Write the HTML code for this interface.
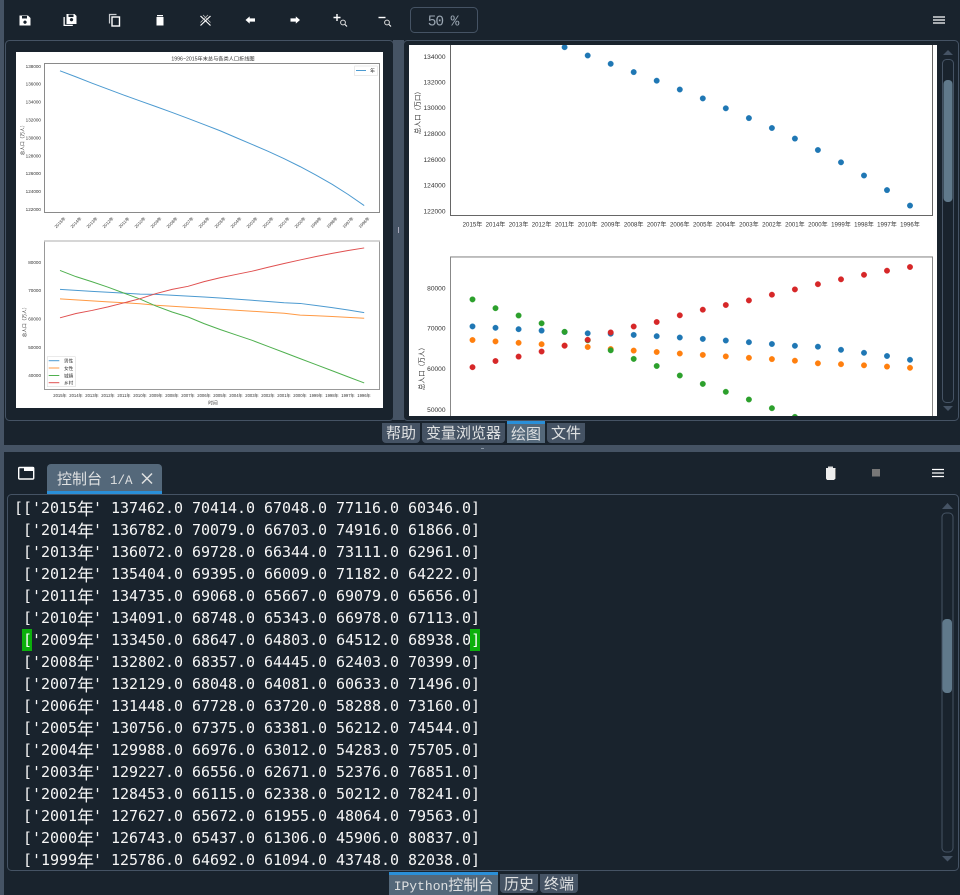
<!DOCTYPE html>
<html><head><meta charset="utf-8"><style>
html,body{margin:0;padding:0;background:#19232d;width:960px;height:895px;overflow:hidden}
body{position:relative}
svg.m{position:absolute;left:0;top:0}
.b{filter:blur(.3px)}
.t{position:absolute;background:#455364;color:#dfe1e2;border-radius:0 0 4px 4px;font:15px/19px "WenQuanYi Zen Hei","Noto Sans CJK SC",sans-serif;text-align:center;box-sizing:border-box}
.a{background:#54687a;border-top:3px solid #2a8fd8;border-radius:0}
#c{position:absolute;left:14px;top:497px;font:15px/22px "DejaVu Sans Mono","Liberation Mono",monospace;color:#f6f6f6;white-space:pre;letter-spacing:-.03px}
#c div{height:22px}
#c i{font:17px/22px "Noto Sans CJK SC",sans-serif;display:inline-block;width:16px;overflow:visible;vertical-align:top}
#c b{font-weight:normal;background:#0cb00c;color:#fff;display:inline-block;height:22px;box-shadow:-1px 0 0 #0cb00c}
</style></head><body>
<svg class="m" width="960" height="895" viewBox="0 0 960 895" xmlns="http://www.w3.org/2000/svg" font-family="'Liberation Sans','Noto Sans CJK SC',sans-serif">
<rect x="0" y="0" width="4" height="895" fill="#455364"/>
<rect x="393" y="40" width="11" height="380" fill="#455364"/>
<rect x="398" y="227" width="1" height="6" fill="#aab"/>
<rect x="0" y="445" width="960" height="7" fill="#455364"/>
<rect x="481" y="448" width="3" height="1" fill="#8a97a5"/>
<rect x="5.5" y="40.5" width="388" height="380" rx="4" fill="#19232d" stroke="#455364"/>
<rect x="403.5" y="40.5" width="555" height="380" rx="4" fill="#19232d" stroke="#455364"/>
<rect x="7.5" y="494.5" width="951" height="376" rx="4" fill="#19232d" stroke="#455364"/>

<!-- toolbar icons -->
<g fill="#fff">
<path fill-rule="evenodd" d="M19.5 15.5h8.5l2.5 2.5v7.5h-11zM22 16v2.5h5V16zM25 20.5a1.7 1.7 0 1 0 .01 0z"/>
<path fill-rule="evenodd" d="M66.5 14h8l2 2v8h-10zM68.5 14.5v2.5h5v-2.5zM71.5 18a1.7 1.7 0 1 0 .01 0z"/>
<path d="M63.5 17h1.3v7.7h8v1.3h-9.3z"/>
<path d="M156.5 17h7v8.5h-7zM157 15h6v1.3h-6z"/>
<path d="M245.5 20l4.2-3.6v2h5.3v3.2h-5.3v2z"/>
<path d="M255 20l-4.2-3.6v2h-5.3v3.2h5.3v2z" transform="translate(45 0)"/>
</g>
<g fill="none" stroke="#fff">
<path d="M109.5 23.5v-9h7" stroke="#c9ccd0" stroke-width="1.2"/>
<rect x="112" y="17" width="7.5" height="9" stroke-width="1.4"/>
<path d="M200.5 16l10 9.5M200.5 25.5l10-9.5" stroke-width="1.2"/>
<path d="M203 15l7.5 7.5M208 15l-7.5 7.5" stroke-width=".8" stroke="#bbb"/>
<path d="M333.5 17.5h7M337 14v7" stroke-width="1.4"/>
<circle cx="343" cy="22.5" r="2.4" stroke-width="1" stroke="#ddd"/><path d="M345 24.5l2 2" stroke-width="1.1"/>
<path d="M378.5 17.5h7" stroke-width="1.4"/>
<circle cx="387" cy="22.5" r="2.4" stroke-width="1" stroke="#ddd"/><path d="M389 24.5l2 2" stroke-width="1.1"/>
<path d="M933 17h12M933 20h12M933 23h12" stroke-width="1.2"/>
<path d="M932 469.5h12M932 473h12M932 476.5h12" stroke-width="1.2"/>
</g>
<rect x="410.5" y="7.5" width="67" height="25" rx="4" fill="none" stroke="#455364"/>
<text x="443" y="25.5" text-anchor="middle" font-family="'Liberation Mono',monospace" font-size="14.5" letter-spacing="-1.1" fill="#9aa6b2" xml:space="preserve">50 %</text>

<!-- left image -->
<rect x="16" y="52" width="367" height="356" fill="#fff"/>
<g class="b">
<rect x="44.5" y="63.5" width="335" height="149" fill="none" stroke="#8a8a8a"/>
<rect x="44.5" y="241" width="335" height="148.5" fill="none" stroke="#999"/>
<path d="M44 241H380" stroke="#c8c8c8" stroke-width="1.6"/>
<g fill="none" stroke-width="1">
<polyline vector-effect="non-scaling-stroke" stroke="#4c9ad0" transform="matrix(16.01 0 0 -8.94 60 1299.7)" points="0,137.462 1,136.782 2,136.072 3,135.404 4,134.735 5,134.091 6,133.45 7,132.802 8,132.129 9,131.448 10,130.756 11,129.988 12,129.227 13,128.453 14,127.627 15,126.743 16,125.786 17,124.761 18,123.626 19,122.389"/>
<g transform="matrix(16.01 0 0 -2.825 60 488.3)">
<polyline vector-effect="non-scaling-stroke" stroke="#4c9ad0" points="0,70.414 1,70.079 2,69.728 3,69.395 4,69.068 5,68.748 6,68.647 7,68.357 8,68.048 9,67.728 10,67.375 11,66.976 12,66.556 13,66.115 14,65.672 15,65.437 16,64.692 17,63.94 18,63.131 19,62.2"/>
<polyline vector-effect="non-scaling-stroke" stroke="#ff9a45" points="0,67.048 1,66.703 2,66.344 3,66.009 4,65.667 5,65.343 6,64.803 7,64.445 8,64.081 9,63.72 10,63.381 11,63.012 12,62.671 13,62.338 14,61.955 15,61.306 16,61.094 17,60.821 18,60.495 19,60.189"/>
<polyline vector-effect="non-scaling-stroke" stroke="#4fb04f" points="0,77.116 1,74.916 2,73.111 3,71.182 4,69.079 5,66.978 6,64.512 7,62.403 8,60.633 9,58.288 10,56.212 11,54.283 12,52.376 13,50.212 14,48.064 15,45.906 16,43.748 17,41.608 18,39.449 19,37.304"/>
<polyline vector-effect="non-scaling-stroke" stroke="#e05050" points="0,60.346 1,61.866 2,62.961 3,64.222 4,65.656 5,67.113 6,68.938 7,70.399 8,71.496 9,73.16 10,74.544 11,75.705 12,76.851 13,78.241 14,79.563 15,80.837 16,82.038 17,83.153 18,84.177 19,85.085"/>
</g>
</g>
<g font-size="5" fill="#333">
<text x="213" y="60.5" text-anchor="middle" font-size="5.2">1996~2015年末总与各类人口折线图</text>
<g text-anchor="end" font-size="4.6">
<text x="41" y="68">138000</text><text x="41" y="85.5">136000</text><text x="41" y="103.5">134000</text><text x="41" y="121.5">132000</text><text x="41" y="139.5">130000</text><text x="41" y="157.5">128000</text><text x="41" y="175">126000</text><text x="41" y="193">124000</text><text x="41" y="211">122000</text>
<text x="41" y="264">80000</text><text x="41" y="292">70000</text><text x="41" y="320.5">60000</text><text x="41" y="349">50000</text><text x="41" y="377">40000</text>
</g>
<text transform="rotate(-90 24 139)" x="24" y="139" text-anchor="middle" font-size="4.7">总人口（万人）</text>
<text transform="rotate(-90 26 321)" x="26" y="321" text-anchor="middle" font-size="4.7">总人口（万人）</text>
<rect x="354.7" y="66" width="22.6" height="9.6" fill="#fff" stroke="#ddd" stroke-width=".6"/>
<path d="M356 70.5h10" stroke="#4c9ad0"/>
<text x="370" y="72.5">年</text>
<g font-size="4.2" text-anchor="middle">
<text transform="rotate(-45 60 222.5)" x="60" y="224">2015年</text><text transform="rotate(-45 76 222.5)" x="76" y="224">2014年</text><text transform="rotate(-45 92 222.5)" x="92" y="224">2013年</text><text transform="rotate(-45 108 222.5)" x="108" y="224">2012年</text><text transform="rotate(-45 124 222.5)" x="124" y="224">2011年</text><text transform="rotate(-45 140 222.5)" x="140" y="224">2010年</text><text transform="rotate(-45 156 222.5)" x="156" y="224">2009年</text><text transform="rotate(-45 172 222.5)" x="172" y="224">2008年</text><text transform="rotate(-45 188 222.5)" x="188" y="224">2007年</text><text transform="rotate(-45 204 222.5)" x="204" y="224">2006年</text><text transform="rotate(-45 220 222.5)" x="220" y="224">2005年</text><text transform="rotate(-45 236 222.5)" x="236" y="224">2004年</text><text transform="rotate(-45 252 222.5)" x="252" y="224">2003年</text><text transform="rotate(-45 268 222.5)" x="268" y="224">2002年</text><text transform="rotate(-45 284 222.5)" x="284" y="224">2001年</text><text transform="rotate(-45 300 222.5)" x="300" y="224">2000年</text><text transform="rotate(-45 316 222.5)" x="316" y="224">1999年</text><text transform="rotate(-45 332 222.5)" x="332" y="224">1998年</text><text transform="rotate(-45 348 222.5)" x="348" y="224">1997年</text><text transform="rotate(-45 364 222.5)" x="364" y="224">1996年</text>
<text x="60" y="397">2015年</text><text x="76" y="397">2014年</text><text x="92" y="397">2013年</text><text x="108" y="397">2012年</text><text x="124" y="397">2011年</text><text x="140" y="397">2010年</text><text x="156" y="397">2009年</text><text x="172" y="397">2008年</text><text x="188" y="397">2007年</text><text x="204" y="397">2006年</text><text x="220" y="397">2005年</text><text x="236" y="397">2004年</text><text x="252" y="397">2003年</text><text x="268" y="397">2002年</text><text x="284" y="397">2001年</text><text x="300" y="397">2000年</text><text x="316" y="397">1999年</text><text x="332" y="397">1998年</text><text x="348" y="397">1997年</text><text x="364" y="397">1996年</text>
</g>
<text x="213" y="404.5" text-anchor="middle" font-size="4.7">时间</text>
<rect x="47.3" y="356.7" width="28" height="30" fill="#fff" stroke="#ddd" stroke-width=".6"/>
<path d="M48.7 360.7h10.6" stroke="#4c9ad0"/><path d="M48.7 368h10.6" stroke="#ff9a45"/><path d="M48.7 375.5h10.6" stroke="#4fb04f"/><path d="M48.7 382.7h10.6" stroke="#e05050"/>
<g font-size="4.6"><text x="64" y="362.5">男性</text><text x="64" y="369.8">女性</text><text x="64" y="377.3">城镇</text><text x="64" y="384.5">乡村</text></g>
</g>
</g>

<!-- right image -->
<rect x="409" y="45" width="528" height="371" fill="#fff"/>
<svg x="409" y="45" width="528" height="371" viewBox="409 45 528 371">
<g class="b">
<path d="M450.5 40V215.5H932.5V40" fill="none" stroke="#666"/>
<path d="M450.5 420V257H932.5V420" fill="none" stroke="#888"/>
<path d="M450.5 256.5H932.5" stroke="#bbb"/>
<g fill="#1f77b4" stroke="#1f77b4" stroke-width=".3">
<circle cx="564.6" cy="47.2" r="2.8"/><circle cx="587.7" cy="55.5" r="2.8"/><circle cx="610.7" cy="63.8" r="2.8"/><circle cx="633.7" cy="72.1" r="2.8"/><circle cx="656.7" cy="80.7" r="2.8"/><circle cx="679.8" cy="89.5" r="2.8"/><circle cx="702.8" cy="98.4" r="2.8"/><circle cx="725.8" cy="108.3" r="2.8"/><circle cx="748.9" cy="118.1" r="2.8"/><circle cx="771.9" cy="128" r="2.8"/><circle cx="794.9" cy="138.6" r="2.8"/><circle cx="817.9" cy="150" r="2.8"/><circle cx="841" cy="162.3" r="2.8"/><circle cx="864" cy="175.5" r="2.8"/><circle cx="887" cy="190.1" r="2.8"/><circle cx="910" cy="205.6" r="2.8"/>
<circle cx="472.5" cy="326.4" r="2.8"/><circle cx="495.5" cy="327.8" r="2.8"/><circle cx="518.6" cy="329.2" r="2.8"/><circle cx="541.6" cy="330.6" r="2.8"/><circle cx="564.6" cy="332" r="2.8"/><circle cx="587.7" cy="333.3" r="2.8"/><circle cx="610.7" cy="333.7" r="2.8"/><circle cx="633.7" cy="334.9" r="2.8"/><circle cx="656.7" cy="336.2" r="2.8"/><circle cx="679.8" cy="337.5" r="2.8"/><circle cx="702.8" cy="338.9" r="2.8"/><circle cx="725.8" cy="340.5" r="2.8"/><circle cx="748.9" cy="342.2" r="2.8"/><circle cx="771.9" cy="344" r="2.8"/><circle cx="794.9" cy="345.8" r="2.8"/><circle cx="817.9" cy="346.7" r="2.8"/><circle cx="841" cy="349.8" r="2.8"/><circle cx="864" cy="352.8" r="2.8"/><circle cx="887" cy="356" r="2.8"/><circle cx="910" cy="359.8" r="2.8"/>
</g>
<g fill="#ff7f0e" stroke="#ff7f0e" stroke-width=".3">
<circle cx="472.5" cy="340" r="2.8"/><circle cx="495.5" cy="341.4" r="2.8"/><circle cx="518.6" cy="342.8" r="2.8"/><circle cx="541.6" cy="344.2" r="2.8"/><circle cx="564.6" cy="345.6" r="2.8"/><circle cx="587.7" cy="347" r="2.8"/><circle cx="610.7" cy="349" r="2.8"/><circle cx="633.7" cy="350.6" r="2.8"/><circle cx="656.7" cy="352" r="2.8"/><circle cx="679.8" cy="353.5" r="2.8"/><circle cx="702.8" cy="354.9" r="2.8"/><circle cx="725.8" cy="356.4" r="2.8"/><circle cx="748.9" cy="357.8" r="2.8"/><circle cx="771.9" cy="359.1" r="2.8"/><circle cx="794.9" cy="360.7" r="2.8"/><circle cx="817.9" cy="363.3" r="2.8"/><circle cx="841" cy="364.2" r="2.8"/><circle cx="864" cy="365.3" r="2.8"/><circle cx="887" cy="366.6" r="2.8"/><circle cx="910" cy="367.8" r="2.8"/>
</g>
<g fill="#2ca02c" stroke="#2ca02c" stroke-width=".3">
<circle cx="472.5" cy="299.4" r="2.8"/><circle cx="495.5" cy="308.2" r="2.8"/><circle cx="518.6" cy="315.5" r="2.8"/><circle cx="541.6" cy="323.3" r="2.8"/><circle cx="564.6" cy="331.8" r="2.8"/><circle cx="587.7" cy="340.3" r="2.8"/><circle cx="610.7" cy="350.3" r="2.8"/><circle cx="633.7" cy="358.9" r="2.8"/><circle cx="656.7" cy="366" r="2.8"/><circle cx="679.8" cy="375.5" r="2.8"/><circle cx="702.8" cy="383.9" r="2.8"/><circle cx="725.8" cy="391.8" r="2.8"/><circle cx="748.9" cy="399.5" r="2.8"/><circle cx="771.9" cy="408.2" r="2.8"/><circle cx="794.9" cy="416.9" r="2.8"/>
</g>
<g fill="#d62728" stroke="#d62728" stroke-width=".3">
<circle cx="472.5" cy="367.2" r="2.8"/><circle cx="495.5" cy="361" r="2.8"/><circle cx="518.6" cy="356.6" r="2.8"/><circle cx="541.6" cy="351.5" r="2.8"/><circle cx="564.6" cy="345.7" r="2.8"/><circle cx="587.7" cy="339.8" r="2.8"/><circle cx="610.7" cy="332.4" r="2.8"/><circle cx="633.7" cy="326.5" r="2.8"/><circle cx="656.7" cy="322" r="2.8"/><circle cx="679.8" cy="315.3" r="2.8"/><circle cx="702.8" cy="309.7" r="2.8"/><circle cx="725.8" cy="305" r="2.8"/><circle cx="748.9" cy="300.4" r="2.8"/><circle cx="771.9" cy="294.7" r="2.8"/><circle cx="794.9" cy="289.4" r="2.8"/><circle cx="817.9" cy="284.2" r="2.8"/><circle cx="841" cy="279.3" r="2.8"/><circle cx="864" cy="274.8" r="2.8"/><circle cx="887" cy="270.7" r="2.8"/><circle cx="910" cy="267" r="2.8"/>
</g>
<g font-size="6.6" fill="#333">
<g text-anchor="end">
<text x="445.5" y="59">134000</text><text x="445.5" y="84.7">132000</text><text x="445.5" y="110.2">130000</text><text x="445.5" y="136">128000</text><text x="445.5" y="162">126000</text><text x="445.5" y="187.7">124000</text><text x="445.5" y="213.5">122000</text>
<text x="445.5" y="290.3">80000</text><text x="445.5" y="330.7">70000</text><text x="445.5" y="371">60000</text><text x="445.5" y="412">50000</text>
</g>
<text transform="rotate(-90 420 111)" x="420" y="111" text-anchor="middle">总人口（万口）</text>
<text transform="rotate(-90 424 367)" x="424" y="367" text-anchor="middle">总人口（万人）</text>
<g text-anchor="middle" font-size="6.1">
<text x="472.5" y="226.5">2015年</text><text x="495.5" y="226.5">2014年</text><text x="518.6" y="226.5">2013年</text><text x="541.6" y="226.5">2012年</text><text x="564.6" y="226.5">2011年</text><text x="587.7" y="226.5">2010年</text><text x="610.7" y="226.5">2009年</text><text x="633.7" y="226.5">2008年</text><text x="656.7" y="226.5">2007年</text><text x="679.8" y="226.5">2006年</text><text x="702.8" y="226.5">2005年</text><text x="725.8" y="226.5">2004年</text><text x="748.9" y="226.5">2003年</text><text x="771.9" y="226.5">2002年</text><text x="794.9" y="226.5">2001年</text><text x="817.9" y="226.5">2000年</text><text x="841" y="226.5">1999年</text><text x="864" y="226.5">1998年</text><text x="887" y="226.5">1997年</text><text x="910" y="226.5">1996年</text>
</g>
</g>
</g>
</svg>

<!-- top scrollbar -->
<rect x="942.5" y="59.5" width="11" height="343" rx="4" fill="none" stroke="#455364"/>
<rect x="943.5" y="80" width="9" height="122" rx="4" fill="#60798b"/>
<path d="M943 55l5-5 5 5z" fill="#455364"/><path d="M943 406h10l-5 5z" fill="#455364"/>

<!-- console chrome -->
<rect x="18.7" y="467.5" width="15" height="11.5" rx="1" fill="none" stroke="#fff" stroke-width="1.4"/>
<path d="M24 467h10v4h-10z" fill="#fff"/>
<path d="M47 494v-26a4 4 0 0 1 4-4h107a4 4 0 0 1 4 4v26z" fill="#54687a"/>
<rect x="47" y="491" width="115" height="3" fill="#2a8fd8"/>
<text x="57" y="484" font-size="15" font-family="'WenQuanYi Zen Hei','Noto Sans CJK SC',sans-serif" fill="#dfe1e2">控制台</text>
<text x="110" y="484" font-size="12.5" font-family="'Liberation Mono',monospace" fill="#dfe1e2">1/A</text>
<path d="M142 473.5l10 10M152 473.5l-10 10" stroke="#dfe1e2" stroke-width="1.5"/>
<path d="M826 468h9.5v10.5l-1.5 1.5h-7l-1-1.5z" fill="#eee"/><path d="M828 466.5h5v1.5h-5z" fill="#ddd"/><path d="M835.5 469v9" stroke="#777"/>
<rect x="872" y="469" width="8" height="7.5" fill="#777"/>

<!-- console scrollbar -->
<rect x="942" y="513" width="11" height="339" rx="4" fill="none" stroke="#455364"/>
<rect x="942.5" y="619" width="9.5" height="74" rx="4" fill="#60798b"/>
<path d="M942 509l5.5-6 5.5 6z" fill="#455364"/><path d="M942 856h11l-5.5 5.5z" fill="#455364"/>
</svg>

<div class="t" style="left:382px;top:423px;width:38px;height:20px">帮助</div>
<div class="t" style="left:422px;top:423px;width:83px;height:20px">变量浏览器</div>
<div class="t a" style="left:507px;top:421px;width:38px;height:22px">绘图</div>
<div class="t" style="left:547px;top:423px;width:38px;height:20px">文件</div>
<div class="t a" style="left:389px;top:872px;width:109px;height:23px;white-space:nowrap"><span style="font:13px 'Liberation Mono',monospace">IPython</span>控制台</div>
<div class="t" style="left:500px;top:874px;width:38px;height:19px">历史</div>
<div class="t" style="left:540px;top:874px;width:38px;height:19px">终端</div>

<div id="c"><div>[['2015<i>年</i>' 137462.0 70414.0 67048.0 77116.0 60346.0]</div><div> ['2014<i>年</i>' 136782.0 70079.0 66703.0 74916.0 61866.0]</div><div> ['2013<i>年</i>' 136072.0 69728.0 66344.0 73111.0 62961.0]</div><div> ['2012<i>年</i>' 135404.0 69395.0 66009.0 71182.0 64222.0]</div><div> ['2011<i>年</i>' 134735.0 69068.0 65667.0 69079.0 65656.0]</div><div> ['2010<i>年</i>' 134091.0 68748.0 65343.0 66978.0 67113.0]</div><div> <b>[</b>'2009<i>年</i>' 133450.0 68647.0 64803.0 64512.0 68938.0<b>]</b></div><div> ['2008<i>年</i>' 132802.0 68357.0 64445.0 62403.0 70399.0]</div><div> ['2007<i>年</i>' 132129.0 68048.0 64081.0 60633.0 71496.0]</div><div> ['2006<i>年</i>' 131448.0 67728.0 63720.0 58288.0 73160.0]</div><div> ['2005<i>年</i>' 130756.0 67375.0 63381.0 56212.0 74544.0]</div><div> ['2004<i>年</i>' 129988.0 66976.0 63012.0 54283.0 75705.0]</div><div> ['2003<i>年</i>' 129227.0 66556.0 62671.0 52376.0 76851.0]</div><div> ['2002<i>年</i>' 128453.0 66115.0 62338.0 50212.0 78241.0]</div><div> ['2001<i>年</i>' 127627.0 65672.0 61955.0 48064.0 79563.0]</div><div> ['2000<i>年</i>' 126743.0 65437.0 61306.0 45906.0 80837.0]</div><div> ['1999<i>年</i>' 125786.0 64692.0 61094.0 43748.0 82038.0]</div></div>
</body></html>
